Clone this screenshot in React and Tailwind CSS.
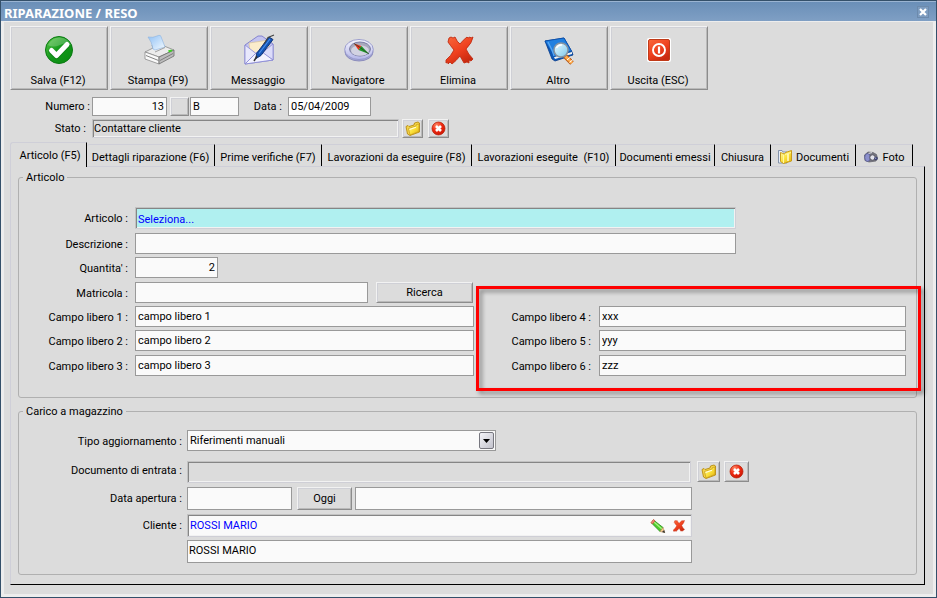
import React from "react";

const raised =
  "border border-t-[#f2f2f2] border-l-[#f2f2f2] border-r-[#8c8c8c] border-b-[#8c8c8c] shadow-[inset_1px_1px_0_#cfd0d6,inset_-1px_-1px_0_#bababa] bg-[#dcdcdc]";
const flat = "border border-[#999999] bg-[#fafafa]";
const sunken =
  "border border-t-[#c2c2c2] border-l-[#c2c2c2] border-r-[#cfcfd6] border-b-[#cfcfd6] shadow-[inset_1px_1px_0_#858585,inset_-1px_-1px_0_#f2f2f2]";

function Defs() {
  return (
    <svg width="0" height="0" className="absolute" aria-hidden="true">
      <defs>
        <linearGradient id="green" x1="0" y1="0" x2="1" y2="1">
          <stop offset="0" stopColor="#5cc84a" />
          <stop offset="0.5" stopColor="#12981a" />
          <stop offset="1" stopColor="#0a8a10" />
        </linearGradient>
        <linearGradient id="red" x1="0" y1="0" x2="0.6" y2="1">
          <stop offset="0" stopColor="#f9683c" />
          <stop offset="0.6" stopColor="#ee3f1e" />
          <stop offset="1" stopColor="#c92a10" />
        </linearGradient>
        <radialGradient id="ball" cx="0.35" cy="0.25" r="0.9">
          <stop offset="0" stopColor="#ff8a66" />
          <stop offset="0.45" stopColor="#f02a12" />
          <stop offset="1" stopColor="#c01000" />
        </radialGradient>
        <linearGradient id="gold" x1="0" y1="0" x2="1" y2="1">
          <stop offset="0" stopColor="#fffbb0" />
          <stop offset="0.5" stopColor="#fbe23c" />
          <stop offset="1" stopColor="#e2ae0c" />
        </linearGradient>
        <linearGradient id="paper" x1="0" y1="0" x2="1" y2="1">
          <stop offset="0" stopColor="#8fc0f4" />
          <stop offset="1" stopColor="#f4faff" />
        </linearGradient>
        <linearGradient id="lilac" x1="0" y1="0" x2="0" y2="1">
          <stop offset="0" stopColor="#f6f6ff" />
          <stop offset="1" stopColor="#b4b6e8" />
        </linearGradient>
        <linearGradient id="lens" x1="0" y1="0" x2="1" y2="1">
          <stop offset="0" stopColor="#e8faff" />
          <stop offset="1" stopColor="#7cc8ee" />
        </linearGradient>
      </defs>
    </svg>
  );
}

const icons = {
  save: (
    <>
      <circle cx="16" cy="16" r="13.500" fill="url(#green)" stroke="#0a7a12" />
      <path d="M5 11Q9 3 17 3.500Q25 4 28 11Q22 8 17 11Q10 14 5 11Z" fill="#fff" opacity="0.22" />
      <path d="M8.500 17.500L13.500 22L23.500 11.500" fill="none" stroke="#0a6a10" strokeWidth="6" strokeLinecap="round" strokeLinejoin="round" opacity="0.5" />
      <path d="M8.500 16.500L13.500 21.500L24 10.500" fill="none" stroke="#fff" strokeWidth="5" strokeLinecap="round" strokeLinejoin="round" />
    </>
  ),
  print: (
    <>
      <path d="M2 18L10 14L9 11L20 10L21 12L31 16L16 23Z" fill="#ececec" stroke="#8a8a8a" strokeWidth="0.800" />
      <path d="M10 15Q9 8 5 3Q10 4 14 2Q18 0 18.500 4L22 13L12 16Z" fill="url(#paper)" stroke="#8ab2e0" strokeWidth="0.600" />
      <path d="M2 18L16 23V30L2 25Z" fill="#fafafa" stroke="#8a8a8a" strokeWidth="0.800" />
      <path d="M16 23L31 16V22L16 30Z" fill="#bcbcbc" stroke="#6c6c6c" strokeWidth="0.800" />
      <path d="M3 21.500L15.500 26.500M17 26.500L30 19.500" stroke="#777" strokeWidth="0.900" fill="none" />
      <path d="M25 16.500L28.500 15.500L29.500 17L26 18.500Z" fill="#3ad420" />
      <path d="M12 18L22 13.500" stroke="#999" strokeWidth="0.900" />
    </>
  ),
  mail: (
    <>
      <path d="M2 11L15 2L19 2L30 10V26L2 30Z" fill="#c4c4f0" stroke="#7c7ccc" strokeWidth="0.900" />
      <path d="M6 9L26 6L27 18L16 22L7 18Z" fill="#fbeccb" stroke="#d8c49a" strokeWidth="0.700" />
      <path d="M2 11L13 19.500L2 30Z" fill="#e8e8fc" stroke="#8c8cd6" strokeWidth="0.800" />
      <path d="M30 10L19 19L30 26Z" fill="#dcdcfa" stroke="#8c8cd6" strokeWidth="0.800" />
      <path d="M2 30L14 18L19 18L30 26Z" fill="#f3f3ff" stroke="#8c8cd6" strokeWidth="0.900" />
      <path d="M26 3L30 5.500L18 21.500L13 24.500L13.500 19.500Z" fill="#1554b4" stroke="#0a2c70" strokeWidth="0.900" />
      <path d="M27 5L16 19.500" stroke="#4a90ec" strokeWidth="1.200" />
      <path d="M31 1L25 3.500L21 10" stroke="#444" strokeWidth="1.100" fill="none" />
      <path d="M14 22L11 27" stroke="#333" strokeWidth="1.500" />
    </>
  ),
  compass: (
    <>
      <ellipse cx="16" cy="18" rx="14" ry="9" fill="#a8aad6" stroke="#7c7eb4" strokeWidth="0.800" />
      <ellipse cx="16" cy="15.500" rx="14.300" ry="10" fill="url(#lilac)" stroke="#9294c8" strokeWidth="0.900" />
      <ellipse cx="17" cy="15" rx="10.500" ry="7" fill="#a8a8bc" stroke="#7476a0" strokeWidth="0.900" />
      <ellipse cx="17" cy="16.500" rx="9" ry="5.300" fill="#d2d2e2" />
      <path d="M11 9.500L18.500 12L15.500 16Z" fill="#e8321c" />
      <path d="M18.500 12L26 20L15.500 16Z" fill="#1f9a2c" />
      <path d="M11 9.500L17 13.500L26 20" stroke="#2a3c1c" strokeWidth="0.700" fill="none" />
    </>
  ),
  cross: (
    <path
      d="M6 4L8 3L10 4L12 3Q14 8 17 10Q20 6 24 3L25 4L27 3L28 4L30 3Q29 9 23 15Q25 20 30 25L28 27L26 26L26 29L24 28L21 29L17 22Q13 27 9 30L7 28L5 30L5 28L3 29L3 26Q8 22 11 16Q7 11 5 8Z"
      fill="url(#red)"
      stroke="#c22c12"
      strokeWidth="0.900"
    />
  ),
  book: (
    <>
      <path d="M2 7L21 4L29 18L30 21L12 27L9 25Z" fill="#0c58b8" stroke="#083c8c" strokeWidth="0.800" />
      <path d="M11 23L29 18V20L12 25Z" fill="#f2f2f2" />
      <path d="M2 7L21 4L28.500 17L11 22.500Z" fill="#2080e0" stroke="#0b4ca8" strokeWidth="0.800" />
      <path d="M5 8L9 16L11 22" stroke="#5aa8f4" strokeWidth="1.200" fill="none" />
      <path d="M22 22L29 29" stroke="#b85a18" strokeWidth="5" />
      <path d="M22.500 22.500L29 29" stroke="#ffac4c" strokeWidth="3" />
      <path d="M24 26L27.500 23M26.500 28.500L30 25.500" stroke="#fff" strokeWidth="1" />
      <circle cx="18" cy="16" r="7" fill="url(#lens)" stroke="#8894a0" strokeWidth="1.500" />
      <path d="M13.500 14Q15 10.500 19 11" stroke="#fff" strokeWidth="1.500" fill="none" />
    </>
  ),
  power: (
    <>
      <rect x="4" y="4" width="24" height="24" rx="2" fill="#fff" />
      <rect x="5.500" y="5.500" width="21" height="21" rx="1.500" fill="url(#red)" stroke="#c03a18" />
      <circle cx="16" cy="16" r="6" fill="none" stroke="#fff" strokeWidth="1.900" />
      <path d="M16 12.500V19.500" stroke="#fff" strokeWidth="2.200" />
    </>
  ),
};

function FolderIcon() {
  return (
    <svg width="16" height="16" viewBox="0 0 16 16" aria-hidden="true">
      <path d="M1 5.500L3 4.500L4 5.500L9 4L9.500 2L13 1L14.500 2V11L5 14.500L2.500 13Z" fill="#f4d448" stroke="#b88c10" strokeWidth="0.900" />
      <path d="M3.500 7.500L11 5L11.500 3.500L14 3V10.500L5 14Z" fill="url(#gold)" stroke="#c49a1c" strokeWidth="0.700" />
      <path d="M4.500 8.500L11 6.200" stroke="#fffde0" strokeWidth="1.200" />
    </svg>
  );
}

function StopIcon() {
  return (
    <svg width="16" height="16" viewBox="0 0 16 16" aria-hidden="true">
      <circle cx="7.500" cy="7.500" r="6.500" fill="url(#ball)" stroke="#b81800" strokeWidth="0.700" />
      <path d="M5 5L10 10M10 5L5 10" stroke="#fff" strokeWidth="2.600" />
    </svg>
  );
}

function DocsIcon() {
  return (
    <svg width="16" height="16" viewBox="0 0 16 16" aria-hidden="true">
      <path d="M1.500 1.500H5L6 3H10V14H1.500Z" fill="#e8eef8" stroke="#7a8aa4" strokeWidth="0.900" />
      <path d="M3.500 3.500L7.500 5L8.500 3.500L14.500 1.500V12L6.500 14.500L3.500 12.500Z" fill="url(#gold)" stroke="#c49410" strokeWidth="0.900" />
      <path d="M6.500 6L6.500 14M8 5.500L14 3.500" stroke="#fff6a8" strokeWidth="1" />
      <path d="M11 5V12" stroke="#fffbd0" strokeWidth="1.500" />
    </svg>
  );
}

function CameraIcon() {
  return (
    <svg width="16" height="16" viewBox="0 0 16 16" aria-hidden="true">
      <path d="M1.500 6L5 3L10 3.500L13.500 5.500L14.500 9L13 12L6 13L2 11.500Z" fill="#75757f" stroke="#606068" strokeWidth="0.700" />
      <ellipse cx="4.500" cy="8.500" rx="2.800" ry="4" fill="#8c90cc" stroke="#50548c" strokeWidth="0.700" />
      <path d="M5.500 4.500L9 3.500" stroke="#d8d8e0" strokeWidth="1.200" />
      <circle cx="9.500" cy="8.500" r="2.700" fill="#e4e4ec" stroke="#4c4c58" strokeWidth="0.900" />
      <circle cx="13" cy="9.500" r="1.800" fill="#3c4270" />
      <circle cx="12.700" cy="9.200" r="0.600" fill="#b8bce8" />
    </svg>
  );
}

function ToolButton({ icon, label }) {
  return (
    <button type="button" className={`flex h-16 w-[98px] flex-col items-center pt-[7px] ${raised}`}>
      <svg width="32" height="32" viewBox="0 0 32 32" aria-hidden="true">
        {icons[icon]}
      </svg>
      <span className="mt-[7px] pr-[2px] leading-4">{label}</span>
    </button>
  );
}

function IconButton({ label, className, children }) {
  return (
    <button type="button" aria-label={label} className={`flex items-center justify-center ${raised} ${className}`}>
      {children}
    </button>
  );
}

const tools = [
  ["save", "Salva (F12)"],
  ["print", "Stampa (F9)"],
  ["mail", "Messaggio"],
  ["compass", "Navigatore"],
  ["cross", "Elimina"],
  ["book", "Altro"],
  ["power", "Uscita (ESC)"],
];

const tabs = [
  { label: "Dettagli riparazione (F6)", width: "w-32" },
  { label: "Prime verifiche (F7)", width: "w-[107px]" },
  { label: "Lavorazioni da eseguire (F8)", width: "w-[150px]" },
  { label: "Lavorazioni eseguite \u00a0(F10)", width: "w-36" },
  { label: "Documenti emessi", width: "w-[99px]" },
  { label: "Chiusura", width: "w-14" },
  { label: "Documenti", width: "w-[85px]", icon: <DocsIcon /> },
  { label: "Foto", width: "w-[57px]", icon: <CameraIcon /> },
];

const topLabel = "pt-[2px] text-right leading-4";
const artLabel = "w-[116px] shrink-0 pt-[2px] pr-[7px] text-right leading-[19px]";
const stockLabel = "w-[168px] shrink-0 pt-[2px] pr-[5px] text-right leading-[19px]";
const group = "rounded-[3px] border border-[#b0b0b0]";
const legend = "ml-1 px-[3px] pt-[2px] leading-[14px]";

function FreeFields({ left, right, className }) {
  return (
    <div className={`flex ${className}`}>
      <label htmlFor={`campo${left.n}`} className={artLabel}>{`Campo libero ${left.n} :`}</label>
      <input id={`campo${left.n}`} defaultValue={left.value} className={`h-[21px] w-[339px] px-[2px] ${flat}`} />
      <label htmlFor={`campo${right.n}`} className="w-[125px] shrink-0 pt-[2px] pr-2 text-right leading-[19px]">
        {`Campo libero ${right.n} :`}
      </label>
      <input id={`campo${right.n}`} defaultValue={right.value} className={`h-[21px] min-w-0 flex-1 px-[2px] ${flat}`} />
    </div>
  );
}

export default function App() {
  return (
    <div className="flex min-h-screen flex-col border border-[#34506a] bg-[#dcdcdc] font-[Roboto,'Liberation_Sans',sans-serif] text-[11px] whitespace-nowrap text-black">
      <Defs />
      <header className="flex h-5 items-center justify-between border-t border-[#9ab4d2] bg-linear-to-b from-[#6a8fb8] to-[#7f9fc4] pr-[7px] pl-[3px]">
        <h1 className="pt-[3px] font-['Noto_Sans','Open_Sans',sans-serif] text-[13px] leading-5 font-bold text-white">RIPARAZIONE / RESO</h1>
        <button type="button" aria-label="Chiudi" className="flex h-3 w-3 items-center justify-center border border-[#6c8aac] bg-[#7d9cc0]">
          <svg width="8" height="8" viewBox="0 0 8 8" className="shrink-0" aria-hidden="true">
            <path d="M1 1L7 7M7 1L1 7" stroke="#fff" strokeWidth="2.200" />
          </svg>
        </button>
      </header>

      <main className="flex-1 border-x-[3px] border-t border-b-[3px] border-[#ededed] pt-1 pr-2 pb-[9px] pl-[6px]">
        <div role="toolbar" className="flex gap-[2px]">
          {tools.map(([icon, label]) => (
            <ToolButton key={icon} icon={icon} label={label} />
          ))}
        </div>

        <div className="mt-[7px] flex h-[19px]">
          <label htmlFor="numero" className={`w-[82px] pr-[2px] ${topLabel}`}>Numero :</label>
          <input id="numero" defaultValue="13" className={`w-[75px] px-[2px] pt-[2px] text-right ${flat}`} />
          <button type="button" aria-label="Serie" className={`ml-[3px] w-[19px] ${raised}`} />
          <input aria-label="Serie" defaultValue="B" className={`ml-px w-[49px] px-[2px] pt-[2px] ${flat}`} />
          <label htmlFor="data" className={`w-[49px] pr-[6px] ${topLabel}`}>Data :</label>
          <input id="data" defaultValue="05/04/2009" className="w-[83px] border border-[#999999] bg-white px-[2px] pt-[2px]" />
        </div>

        <div className="mt-[3px] flex h-[19px]">
          <label htmlFor="stato" className={`w-[82px] pr-[6px] ${topLabel}`}>Stato :</label>
          <input id="stato" readOnly defaultValue="Contattare cliente" className={`w-[307px] bg-[#dcdcdc] px-px pt-[2px] ${sunken}`} />
          <IconButton label="Apri stato" className="ml-[3px] w-[21px]"><FolderIcon /></IconButton>
          <IconButton label="Cancella stato" className="ml-[5px] w-[21px]"><StopIcon /></IconButton>
        </div>

        <div role="tablist" className="mt-1 flex h-6 items-end">
          <button
            type="button"
            role="tab"
            aria-selected="true"
            className="z-10 -mb-px h-[25px] w-[77px] rounded-tl-[3px] border-t border-r border-l border-t-[#cfcfd8] border-r-black border-l-[#cfcfd8] bg-[#dcdcdc] pt-[3px] pl-[3px]"
          >
            Articolo (F5)
          </button>
          {tabs.map((tab) => (
            <button
              key={tab.label}
              type="button"
              role="tab"
              aria-selected="false"
              className={`flex h-[22px] shrink-0 items-center justify-center gap-[3px] rounded-tl-[3px] border-t border-r border-t-[#cfcfd8] border-r-black pt-[3px] ${tab.width}`}
            >
              {tab.icon}
              <span className="pt-[2px]">{tab.label}</span>
            </button>
          ))}
        </div>

        <div role="tabpanel" className="border border-t-[#cfcfd8] border-r-black border-b-black border-l-[#cfcfd8] px-[7px] pt-[2px] pb-[9px]">
          <fieldset className={`pr-[10px] pb-[21px] ${group}`}>
            <legend className={legend}>Articolo</legend>
            <div className="flex pt-[22px]">
              <label htmlFor="articolo" className={artLabel}>Articolo :</label>
              <input id="articolo" readOnly defaultValue="Seleziona..." className={`h-[22px] w-[601px] bg-[#b0f0f0] px-[2px] pt-[2px] text-[#0000ff] ${sunken}`} />
            </div>
            <div className="mt-1 flex">
              <label htmlFor="descrizione" className={artLabel}>Descrizione :</label>
              <input id="descrizione" className={`h-[21px] w-[601px] px-[2px] ${flat}`} />
            </div>
            <div className="mt-[3px] flex">
              <label htmlFor="quantita" className={artLabel}>Quantita' :</label>
              <input id="quantita" defaultValue="2" className={`h-[21px] w-[83px] px-[2px] text-right ${flat}`} />
            </div>
            <div className="mt-1 flex">
              <label htmlFor="matricola" className={artLabel}>Matricola :</label>
              <input id="matricola" className={`h-[21px] w-[233px] px-[2px] ${flat}`} />
              <button type="button" className={`ml-2 h-[21px] w-[97px] pt-[2px] ${raised}`}>Ricerca</button>
            </div>
            <div className="relative mt-[3px]">
              <FreeFields left={{ n: 1, value: "campo libero 1" }} right={{ n: 4, value: "xxx" }} className="" />
              <FreeFields left={{ n: 2, value: "campo libero 2" }} right={{ n: 5, value: "yyy" }} className="mt-[3px]" />
              <FreeFields left={{ n: 3, value: "campo libero 3" }} right={{ n: 6, value: "zzz" }} className="mt-1" />
              <div className="pointer-events-none absolute -top-5 -right-[15px] -bottom-[15px] left-[457px] border-[3px] border-[#ff0000] drop-shadow-[3px_3px_2px_rgba(0,0,0,0.4)]" />
            </div>
          </fieldset>

          <fieldset className={`mt-[5px] pr-[10px] pb-[11px] ${group}`}>
            <legend className={legend}>Carico a magazzino</legend>
            <div className="flex pt-[11px]">
              <label htmlFor="tipo" className={stockLabel}>Tipo aggiornamento :</label>
              <div className="relative h-[21px] w-[309px]">
                <select id="tipo" className={`h-full w-full appearance-none rounded-none px-[2px] pt-[2px] ${flat}`}>
                  <option>Riferimenti manuali</option>
                </select>
                <span className="pointer-events-none absolute top-[2px] right-[2px] flex h-[17px] w-[15px] items-center justify-center rounded-[2px] border border-[#77777f] bg-linear-to-br from-[#f4f4f8] to-[#c2c2cc]">
                  <svg width="7" height="4" viewBox="0 0 7 4" aria-hidden="true">
                    <path d="M0 0H7L3.500 4Z" />
                  </svg>
                </span>
              </div>
            </div>
            <div className="mt-[10px] flex h-[22px]">
              <label htmlFor="documento" className="w-[168px] shrink-0 pr-[5px] text-right leading-[19px]">Documento di entrata :</label>
              <input id="documento" readOnly className={`w-[504px] bg-[#dcdcdc] px-[2px] ${sunken}`} />
              <IconButton label="Apri documento" className="ml-[6px] h-[21px] w-[23px]"><FolderIcon /></IconButton>
              <IconButton label="Cancella documento" className="ml-1 h-[21px] w-[25px]"><StopIcon /></IconButton>
            </div>
            <div className="mt-1 flex h-[23px]">
              <label htmlFor="apertura" className={stockLabel}>Data apertura :</label>
              <input id="apertura" className={`w-[105px] px-[2px] ${flat}`} />
              <button type="button" className={`ml-[5px] w-[55px] pt-[2px] ${raised}`}>Oggi</button>
              <input aria-label="Note apertura" className={`ml-[3px] w-[337px] px-[2px] ${flat}`} />
            </div>
            <div className="mt-1 flex h-[23px]">
              <label htmlFor="cliente" className={stockLabel}>Cliente :</label>
              <div className={`flex w-[505px] items-center bg-[#fafafa] pr-[6px] pl-[2px] ${sunken}`}>
                <input id="cliente" readOnly defaultValue="ROSSI MARIO" className="min-w-0 flex-1 bg-transparent pt-[2px] text-[#0000ff]" />
                <button type="button" aria-label="Modifica cliente">
                  <svg width="16" height="16" viewBox="0 0 16 16" aria-hidden="true">
                    <path d="M3.500 2L13 9.500L10 13.500L1.500 5Z" fill="#4ccc2c" stroke="#2a8a1c" strokeWidth="0.800" />
                    <path d="M4 4L12 11" stroke="#a8f480" strokeWidth="1.300" />
                    <path d="M1 4.500L3.500 1.500L5 2.800L2.500 6Z" fill="#f08878" stroke="#c84838" strokeWidth="0.700" />
                    <path d="M13 9.500L14.800 14.500L10 13.500Z" fill="#f4c890" stroke="#b08850" strokeWidth="0.600" />
                    <path d="M14.200 12L15 15L12 14Z" fill="#333" />
                  </svg>
                </button>
                <button type="button" aria-label="Rimuovi cliente" className="ml-[7px]">
                  <svg width="12" height="12" viewBox="2 2 29 29" aria-hidden="true">{icons.cross}</svg>
                </button>
              </div>
            </div>
            <div className="mt-[3px] flex h-[23px] pl-[168px]">
              <input aria-label="Ragione sociale" defaultValue="ROSSI MARIO" className={`w-[505px] px-px pb-px ${flat}`} />
            </div>
          </fieldset>
        </div>
      </main>
    </div>
  );
}
